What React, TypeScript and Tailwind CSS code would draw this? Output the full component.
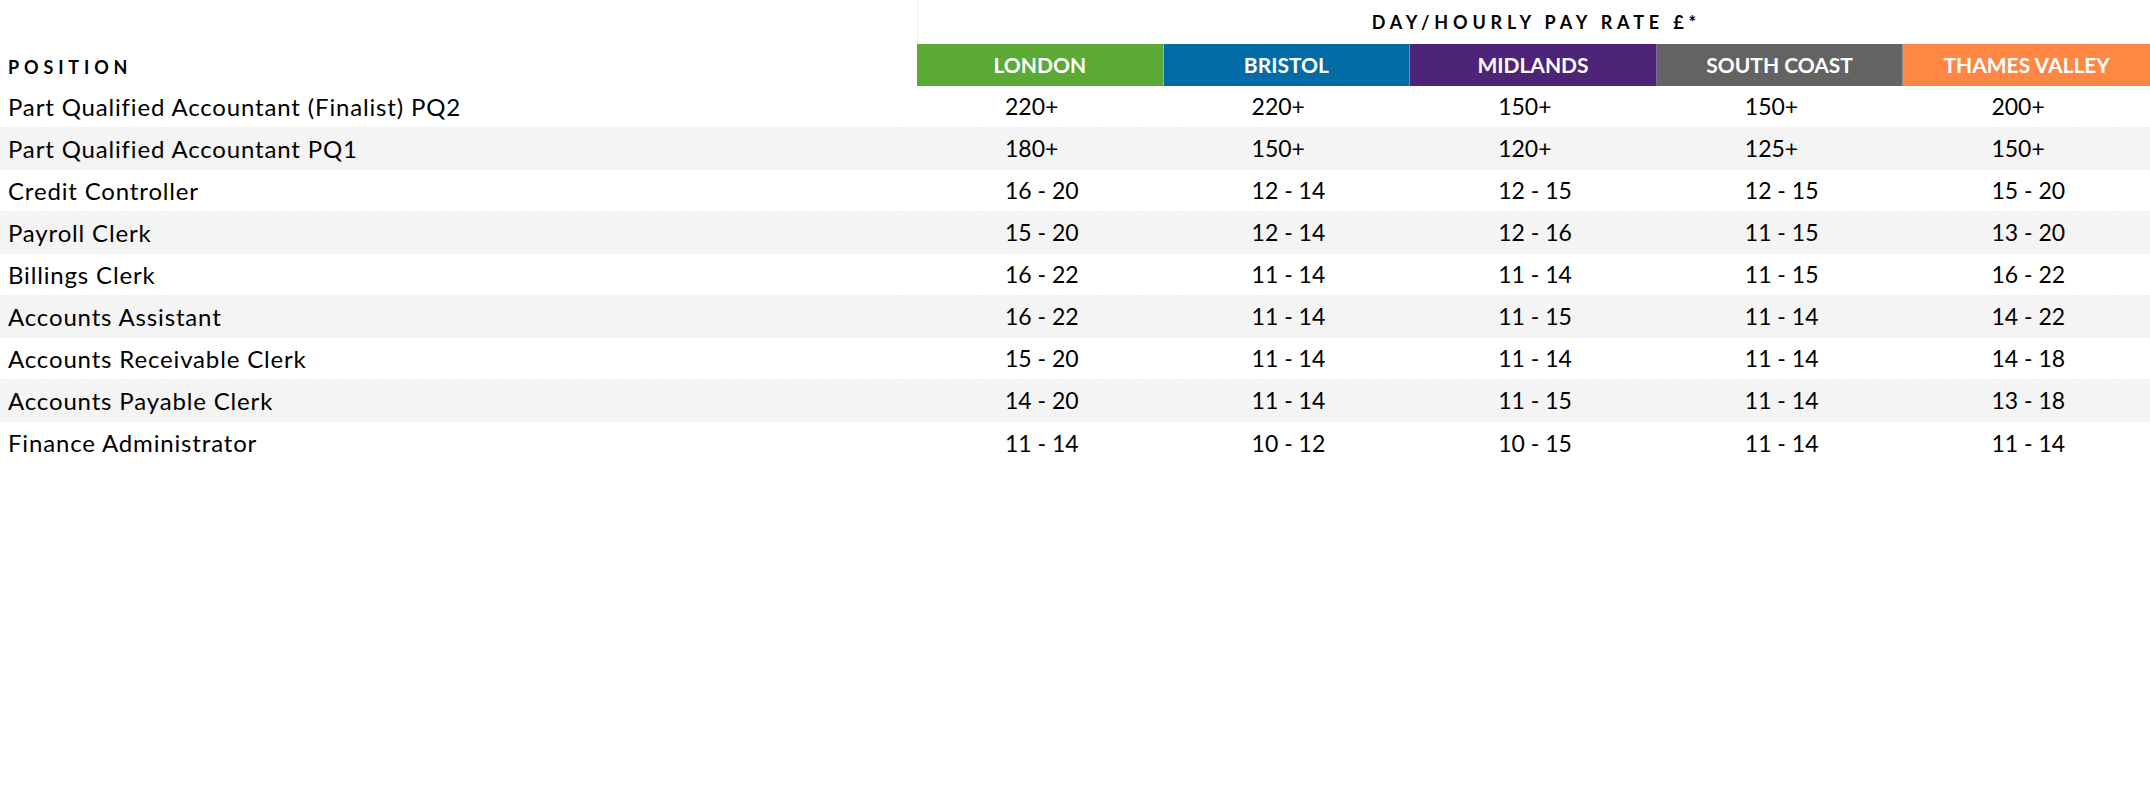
const regions = [
  { name: "London", bg: "bg-[#5aaa35]" },
  { name: "Bristol", bg: "bg-[#036ca7]" },
  { name: "Midlands", bg: "bg-[#4d2478]" },
  { name: "South Coast", bg: "bg-[#636363]" },
  { name: "Thames Valley", bg: "bg-[#ff8643]" },
];

const rows: [string, string[]][] = [
  ["Part Qualified Accountant (Finalist) PQ2", ["220+", "220+", "150+", "150+", "200+"]],
  ["Part Qualified Accountant PQ1", ["180+", "150+", "120+", "125+", "150+"]],
  ["Credit Controller", ["16 - 20", "12 - 14", "12 - 15", "12 - 15", "15 - 20"]],
  ["Payroll Clerk", ["15 - 20", "12 - 14", "12 - 16", "11 - 15", "13 - 20"]],
  ["Billings Clerk", ["16 - 22", "11 - 14", "11 - 14", "11 - 15", "16 - 22"]],
  ["Accounts Assistant", ["16 - 22", "11 - 14", "11 - 15", "11 - 14", "14 - 22"]],
  ["Accounts Receivable Clerk", ["15 - 20", "11 - 14", "11 - 14", "11 - 14", "14 - 18"]],
  ["Accounts Payable Clerk", ["14 - 20", "11 - 14", "11 - 15", "11 - 14", "13 - 18"]],
  ["Finance Administrator", ["11 - 14", "10 - 12", "10 - 15", "11 - 14", "11 - 14"]],
];

export default function App() {
  return (
    <div className="w-[2150px] h-[792px] bg-white text-black font-['Lato','Noto_Sans',sans-serif]">
      {/* header line 1 */}
      <div className="grid grid-cols-[917px_repeat(5,minmax(0,1fr))] h-[44px]">
        <div />
        <div className="col-span-5 border-l border-[#ececec] flex items-center justify-center">
          <span className="text-[18px] font-bold tracking-[0.27em] pl-[0.27em]">DAY/HOURLY PAY RATE £*</span>
        </div>
      </div>

      {/* header line 2 */}
      <div className="grid grid-cols-[917px_repeat(5,minmax(0,1fr))] h-[42px]">
        <div className="flex items-center pl-2 pt-1">
          <span className="text-[18px] font-bold tracking-[0.27em]">POSITION</span>
        </div>
        {regions.map((r) => (
          <div
            key={r.name}
            className={`${r.bg} flex items-center justify-center border-r border-white/30 last:border-r-0 text-white text-[21px] font-bold uppercase`}
          >
            {r.name}
          </div>
        ))}
      </div>

      {/* body */}
      {rows.map(([pos, vals], i) => (
        <div
          key={pos}
          className={`grid grid-cols-[917px_repeat(5,minmax(0,1fr))] h-[42px] ${i < rows.length - 1 ? "border-b border-dashed border-[#f0f0f0]" : ""} ${i % 2 === 1 ? "bg-[#f4f4f4]" : "bg-white"}`}
        >
          <div className="flex items-center pl-2 text-[24px] tracking-[0.035em]">{pos}</div>
          {vals.map((v, j) => (
            <div key={j} className="flex items-center pl-[88px] text-[23px]">
              {v}
            </div>
          ))}
        </div>
      ))}
    </div>
  );
}
